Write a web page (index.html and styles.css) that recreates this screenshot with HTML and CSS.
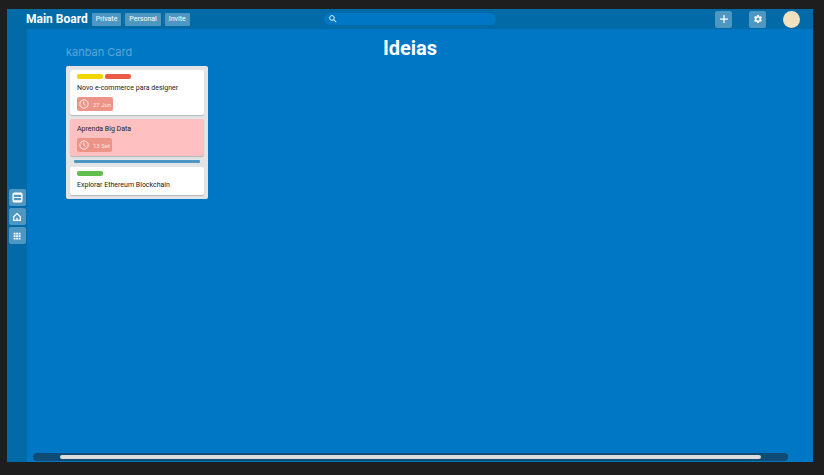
FILE: index.html
```html
<!DOCTYPE html>
<html lang="pt">
<head>
<meta charset="utf-8">
<title>Main Board</title>
<link rel="stylesheet" href="styles.css">
</head>
<body>
<div class="app">
  <header class="topbar">
    <div class="brand">
      <h1 class="brand-name">Main Board</h1>
      <nav class="board-actions">
        <button class="chip">Private</button>
        <span class="divider"></span>
        <button class="chip">Personal</button>
        <span class="divider"></span>
        <button class="chip">Invite</button>
      </nav>
    </div>
    <label class="search">
      <svg class="search-icon" viewBox="0 0 24 24" aria-hidden="true"><path d="M15.5 14h-.8l-.3-.3A6.5 6.5 0 1 0 13.700 14.400l.3.3v.8l5 5 1.500-1.500zm-6 0a4.500 4.500 0 1 1 0-9 4.500 4.500 0 0 1 0 9z"/></svg>
      <input class="search-input" type="search" aria-label="Search">
    </label>
    <div class="tools">
      <button class="icon-button" aria-label="Add">
        <svg viewBox="0 0 24 24"><path d="M10.500 2.500h3v8h8v3h-8v8h-3v-8h-8v-3h8z"/></svg>
      </button>
      <button class="icon-button" aria-label="Settings">
        <svg viewBox="0 0 24 24"><path d="M19.140 12.940c.04-.3.06-.61.06-.94 0-.32-.02-.64-.07-.94l2.030-1.580a.49.49 0 0 0 .12-.61l-1.920-3.320a.49.49 0 0 0-.59-.22l-2.390.96c-.5-.38-1.030-.7-1.620-.94l-.36-2.540a.48.48 0 0 0-.48-.41h-3.840c-.24 0-.43.17-.47.41l-.36 2.540c-.59.24-1.130.57-1.620.94l-2.390-.96a.48.48 0 0 0-.59.22L2.740 8.870a.47.47 0 0 0 .12.61l2.030 1.580c-.05.3-.09.63-.09.94s.02.64.07.94l-2.030 1.580a.49.49 0 0 0-.12.61l1.920 3.320c.12.22.37.29.59.22l2.390-.96c.5.38 1.030.7 1.620.94l.36 2.540c.05.24.24.41.48.41h3.840c.24 0 .44-.17.47-.41l.36-2.540c.59-.24 1.130-.56 1.620-.94l2.390.96c.22.08.47 0 .59-.22l1.920-3.320a.47.47 0 0 0-.12-.61zM12 15.600a3.600 3.600 0 1 1 0-7.200 3.600 3.600 0 0 1 0 7.200z"/></svg>
      </button>
      <button class="avatar" aria-label="Profile"></button>
    </div>
  </header>

  <nav class="sidebar">
    <button class="icon-button" aria-label="Boards">
      <svg class="large" viewBox="0 0 24 24"><path fill-rule="evenodd" d="M5 1h14a4 4 0 0 1 4 4v14a4 4 0 0 1-4 4H5a4 4 0 0 1-4-4V5a4 4 0 0 1 4-4zM4 6v5h16V6zm0 7v5h16v-5z"/></svg>
    </button>
    <button class="icon-button" aria-label="Home">
      <svg viewBox="0 0 24 24"><path class="outline" d="M4 11.500L12 4l8 7.500V20H4zM12 20v-6"/></svg>
    </button>
    <button class="icon-button" aria-label="Apps">
      <svg viewBox="0 0 24 24"><path d="M4 4h4.500v4.500H4zM10 4h4.500v4.500H10zM16 4h4.500v4.500H16zM4 10h4.500v4.500H4zM10 10h4.500v4.500H10zM16 10h4.500v4.500H16zM4 16h4.500v4.500H4zM10 16h4.500v4.500H10zM16 16h4.500v4.500H16z"/></svg>
    </button>
  </nav>

  <main class="board">
    <div class="board-body">
      <section class="column">
        <h3 class="column-title">kanban Card</h3>
        <div class="list">
          <article class="card">
            <div class="labels"><span class="label yellow"></span><span class="label red"></span></div>
            <p class="card-title">Novo e-commerce para designer</p>
            <time class="due"><svg viewBox="0 0 24 24"><circle cx="12" cy="12" r="10"/><path d="M11.500 6v6.500l4 3"/></svg>27 Jun</time>
          </article>
          <article class="card late">
            <p class="card-title">Aprenda Big Data</p>
            <time class="due"><svg viewBox="0 0 24 24"><circle cx="12" cy="12" r="10"/><path d="M11.500 6v6.500l4 3"/></svg>13 Set</time>
          </article>
          <div class="drop-line"></div>
          <article class="card">
            <div class="labels"><span class="label green"></span></div>
            <p class="card-title">Explorar Ethereum Blockchain</p>
          </article>
        </div>
      </section>
      <h2 class="board-title">Ideias</h2>
    </div>
    <div class="scroll-track"><div class="scroll-thumb"></div></div>
  </main>
</div>
</body>
</html>
```
FILE: styles.css
```css
* {
  box-sizing: border-box;
}

body {
  margin: 0;
  padding: 9px 11px 13px 7px;
  min-height: 100vh;
  display: flex;
  background: #1e1e1e;
  font-family: Roboto, "Liberation Sans", sans-serif;
}

h1, h2, h3, p {
  margin: 0;
}

button {
  margin: 0;
  padding: 0;
  border: 0;
  font-family: inherit;
  color: #fff;
  background: #4e97c2;
}

svg {
  display: block;
  fill: #fff;
}

.app {
  flex: 1;
  display: grid;
  grid-template: 20px 1fr / 20px 1fr;
  background: #0077c5;
}

.topbar {
  grid-column: 1 / -1;
  display: grid;
  grid-template-columns: 1fr 172px 1fr;
  align-items: center;
  padding: 0 13px;
  background: #026aa7;
}

.brand, .board-actions, .tools {
  display: flex;
  align-items: center;
}

.brand {
  gap: 4px;
  padding-left: 6px;
}

.brand-name {
  font-size: 12px;
  line-height: 20px;
  font-weight: 700;
  color: #fff;
  white-space: nowrap;
}

.board-actions {
  gap: 1px;
}

.chip {
  height: 13px;
  padding: 0 4px;
  border-radius: 1px;
  font-size: 7px;
  line-height: 13px;
  font-weight: 400;
}

.divider {
  width: 1px;
  height: 10px;
  margin-left: 1px;
  background: #1875ad;
}

.search {
  display: flex;
  align-items: center;
  gap: 4px;
  height: 12px;
  padding: 0 4px;
  border-radius: 6px;
  background: #0077c5;
}

.search-icon {
  width: 10px;
  height: 10px;
}

.search-input {
  flex: 1;
  min-width: 0;
  height: 12px;
  padding: 0;
  border: 0;
  outline: 0;
  background: transparent;
  font: 7px Roboto, sans-serif;
  color: #fff;
}

.tools {
  justify-content: flex-end;
  gap: 17px;
}

.icon-button {
  display: grid;
  place-items: center;
  width: 17px;
  height: 17px;
  border-radius: 2px;
}

.icon-button svg {
  width: 10px;
  height: 10px;
}

.icon-button .large {
  width: 11px;
  height: 11px;
}

.outline {
  fill: none;
  stroke: #fff;
  stroke-width: 3;
}

.avatar {
  width: 17px;
  height: 17px;
  border-radius: 50%;
  background: #f0e1c0;
}

.sidebar {
  display: flex;
  flex-direction: column;
  align-items: center;
  justify-content: center;
  gap: 2px;
  padding-bottom: 58px;
  background: #026aa7;
}

.board {
  display: flex;
  flex-direction: column;
  justify-content: space-between;
}

.board-body {
  display: grid;
  grid-template-columns: 1fr auto 1fr;
  align-items: start;
  padding: 7px 59px 0 39px;
}

.board-title {
  font-size: 20px;
  line-height: 24px;
  font-weight: 700;
  color: #fff;
}

.column {
  width: 142px;
  padding-top: 9px;
}

.column-title {
  margin-bottom: 7px;
  font-family: Inter, sans-serif;
  font-size: 11px;
  line-height: 14px;
  font-weight: 400;
  color: #5ba6d8;
}

.list {
  display: flex;
  flex-direction: column;
  gap: 4px;
  padding: 4px;
  border-radius: 2px;
  background: #e2e4e6;
}

.card {
  padding: 4px 7px;
  border-radius: 2px;
  background: #fff;
  box-shadow: 0 1px 1px #b3b8bb;
}

.late {
  background: #ffc0c1;
}

.labels {
  display: flex;
  gap: 2px;
  margin-bottom: 3px;
}

.label {
  width: 26px;
  height: 5px;
  border-radius: 2px;
}

.yellow {
  background: #f2d600;
}

.red {
  background: #eb5a46;
}

.green {
  background: #61bd4f;
}

.card-title {
  font-size: 7px;
  line-height: 12px;
  color: #222;
  white-space: nowrap;
}

.due {
  display: flex;
  align-items: center;
  gap: 4px;
  width: max-content;
  height: 14px;
  margin-top: 3px;
  padding: 0 2px;
  border-radius: 2px;
  background: #ec9488;
  font-size: 6px;
  color: #fbe4e0;
}

.due svg {
  width: 10px;
  height: 10px;
  fill: none;
  stroke: #fff;
  stroke-width: 2;
}

.drop-line {
  height: 3px;
  margin: 0 4px;
  border-radius: 1px;
  background: #4e97c2;
}

.scroll-track {
  margin: 0 25px 1px 6px;
  padding: 2px 27px;
  border-radius: 4px;
  background: #0f4c75;
}

.scroll-thumb {
  height: 4px;
  border-radius: 2px;
  background: #dcdcdc;
}
```
